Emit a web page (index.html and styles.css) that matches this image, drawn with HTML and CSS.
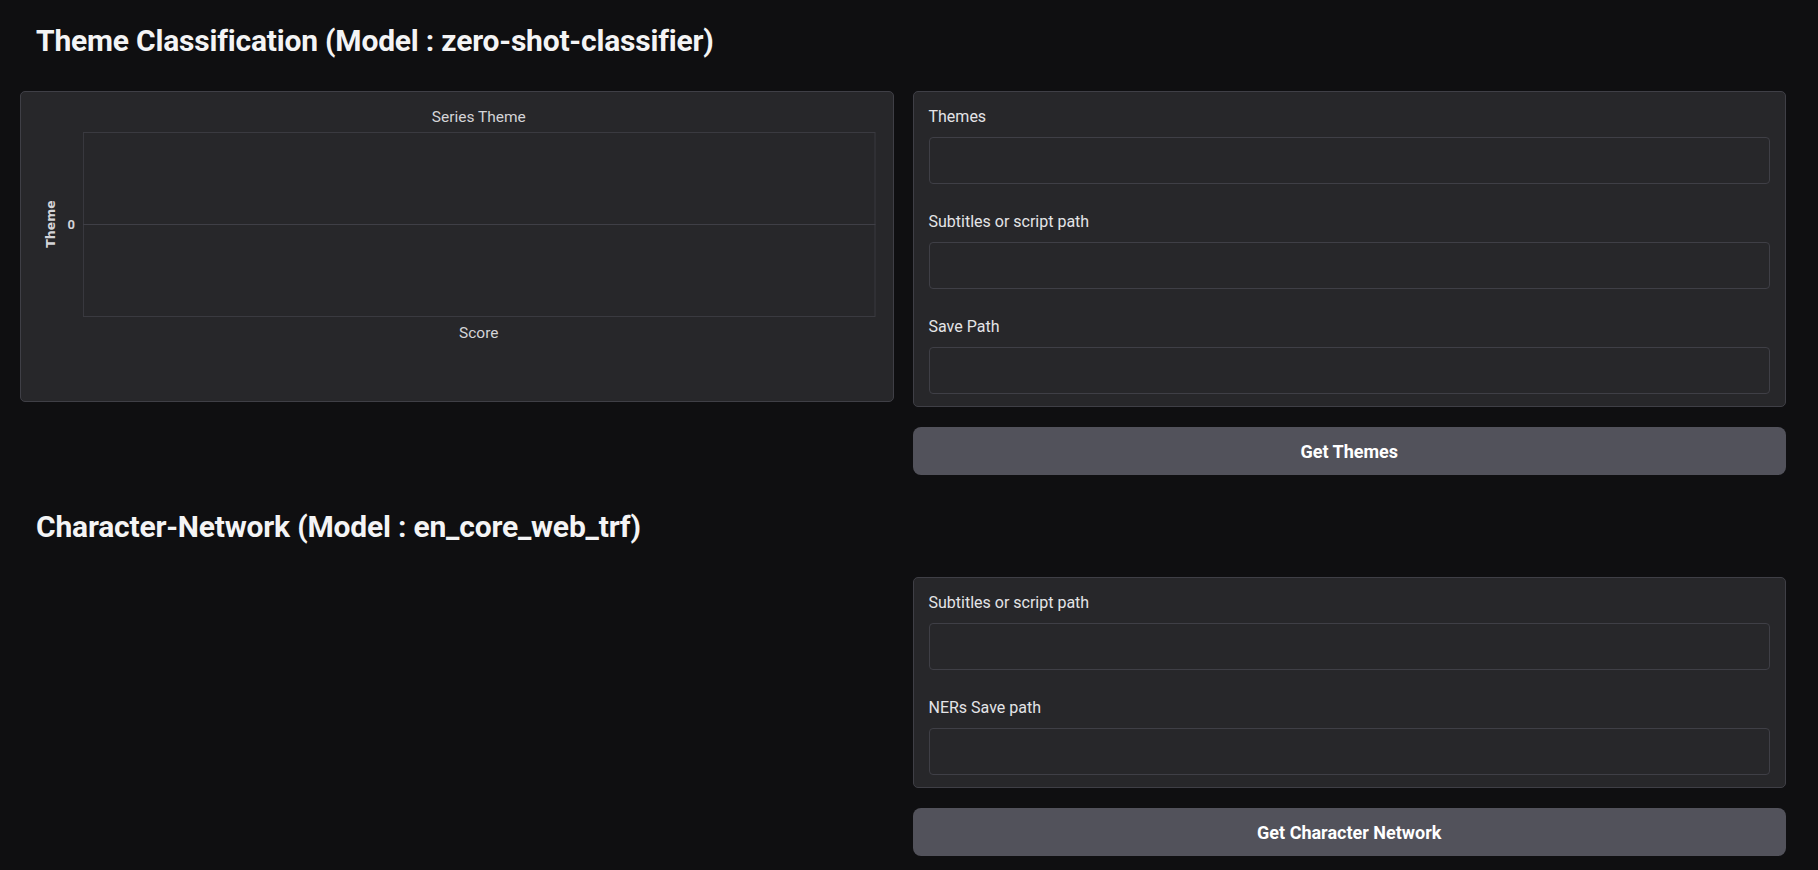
FILE: index.html
```html
<!DOCTYPE html>
<html lang="en">
<head>
<meta charset="utf-8">
<title>Series Analyzer</title>
<link rel="stylesheet" href="styles.css">
</head>
<body>
<div class="app">
  <section class="section">
    <h2 class="heading">Theme Classification (Model : zero-shot-classifier)</h2>
    <div class="row">
      <div class="col">
        <div class="panel plot-panel">
          <svg class="chart" viewBox="0 0 872 309" preserveAspectRatio="none">
            <text class="chart-title" x="458" y="30" text-anchor="middle">Series Theme</text>
            <rect class="plot-frame" x="62.5" y="40.5" width="792" height="184"></rect>
            <line class="zero-line" x1="62" y1="132.5" x2="855" y2="132.5"></line>
            <text class="tick" x="54" y="137" text-anchor="end">0</text>
            <text class="axis-title" x="0" y="0" text-anchor="middle" transform="translate(34 132) rotate(-90)">Theme</text>
            <text class="chart-label" x="458" y="246" text-anchor="middle">Score</text>
          </svg>
        </div>
      </div>
      <div class="col">
        <div class="panel form">
          <label class="field"><span class="field-label">Themes</span><input class="field-input" type="text"></label>
          <label class="field"><span class="field-label">Subtitles or script path</span><input class="field-input" type="text"></label>
          <label class="field"><span class="field-label">Save Path</span><input class="field-input" type="text"></label>
        </div>
        <button class="btn" type="button">Get Themes</button>
      </div>
    </div>
  </section>
  <section class="section">
    <h2 class="heading">Character-Network (Model : en_core_web_trf)</h2>
    <div class="row">
      <div class="col"></div>
      <div class="col">
        <div class="panel form">
          <label class="field"><span class="field-label">Subtitles or script path</span><input class="field-input" type="text"></label>
          <label class="field"><span class="field-label">NERs Save path</span><input class="field-input" type="text"></label>
        </div>
        <button class="btn" type="button">Get Character Network</button>
      </div>
    </div>
  </section>
</div>
</body>
</html>
```
FILE: styles.css
```css
* { box-sizing: border-box; }

html, body {
  margin: 0;
  background: #0f0f11;
  color: #f4f4f5;
  font-family: Roboto, "Noto Sans", sans-serif;
}

.app {
  display: flex;
  flex-direction: column;
  gap: 32px;
  padding: 21px 32px 0 20px;
}

.section {
  display: flex;
  flex-direction: column;
  gap: 30px;
}

.heading {
  margin: 0 0 0 16px;
  font-size: 30px;
  line-height: 40px;
  font-weight: 700;
  letter-spacing: -0.2px;
  color: #f4f4f5;
}

.row {
  display: grid;
  grid-template-columns: 1fr 1fr;
  gap: 19px;
  align-items: start;
}

.col {
  display: flex;
  flex-direction: column;
  gap: 20px;
}

.panel {
  background: #27272a;
  border: 1px solid #3f3f46;
  border-radius: 5px;
}

.plot-panel {
  height: 311px;
}

.chart {
  display: block;
  width: 100%;
  height: 309px;
}

.chart-title, .chart-label {
  font-family: Roboto, sans-serif;
  font-size: 15.5px;
  fill: #d4d4d8;
}

.plot-frame {
  fill: none;
  stroke: #3a3a40;
  stroke-width: 1;
}

.zero-line {
  stroke: #3f3f46;
  stroke-width: 1;
}

.tick {
  font-family: Roboto, sans-serif;
  font-size: 13px;
  font-weight: 700;
  fill: #d4d4d8;
}

.axis-title {
  font-family: "DejaVu Sans", sans-serif;
  font-size: 12.5px;
  font-weight: 700;
  fill: #d4d4d8;
}

.form {
  display: flex;
  flex-direction: column;
  gap: 28px;
  padding: 15px 15px 12px;
}

.field {
  display: flex;
  flex-direction: column;
  gap: 10px;
}

.field-label {
  font-size: 16px;
  line-height: 20px;
  color: #e4e4e7;
}

.field-input {
  height: 47px;
  width: 100%;
  background: #27272a;
  border: 1px solid #3f3f46;
  border-radius: 4px;
  color: #f4f4f5;
  font: inherit;
  padding: 0 12px;
  outline: none;
}

.btn {
  height: 48px;
  border: none;
  border-radius: 8px;
  background: #52525b;
  color: #ffffff;
  font-family: Roboto, sans-serif;
  font-size: 18px;
  font-weight: 700;
  cursor: pointer;
}
```
